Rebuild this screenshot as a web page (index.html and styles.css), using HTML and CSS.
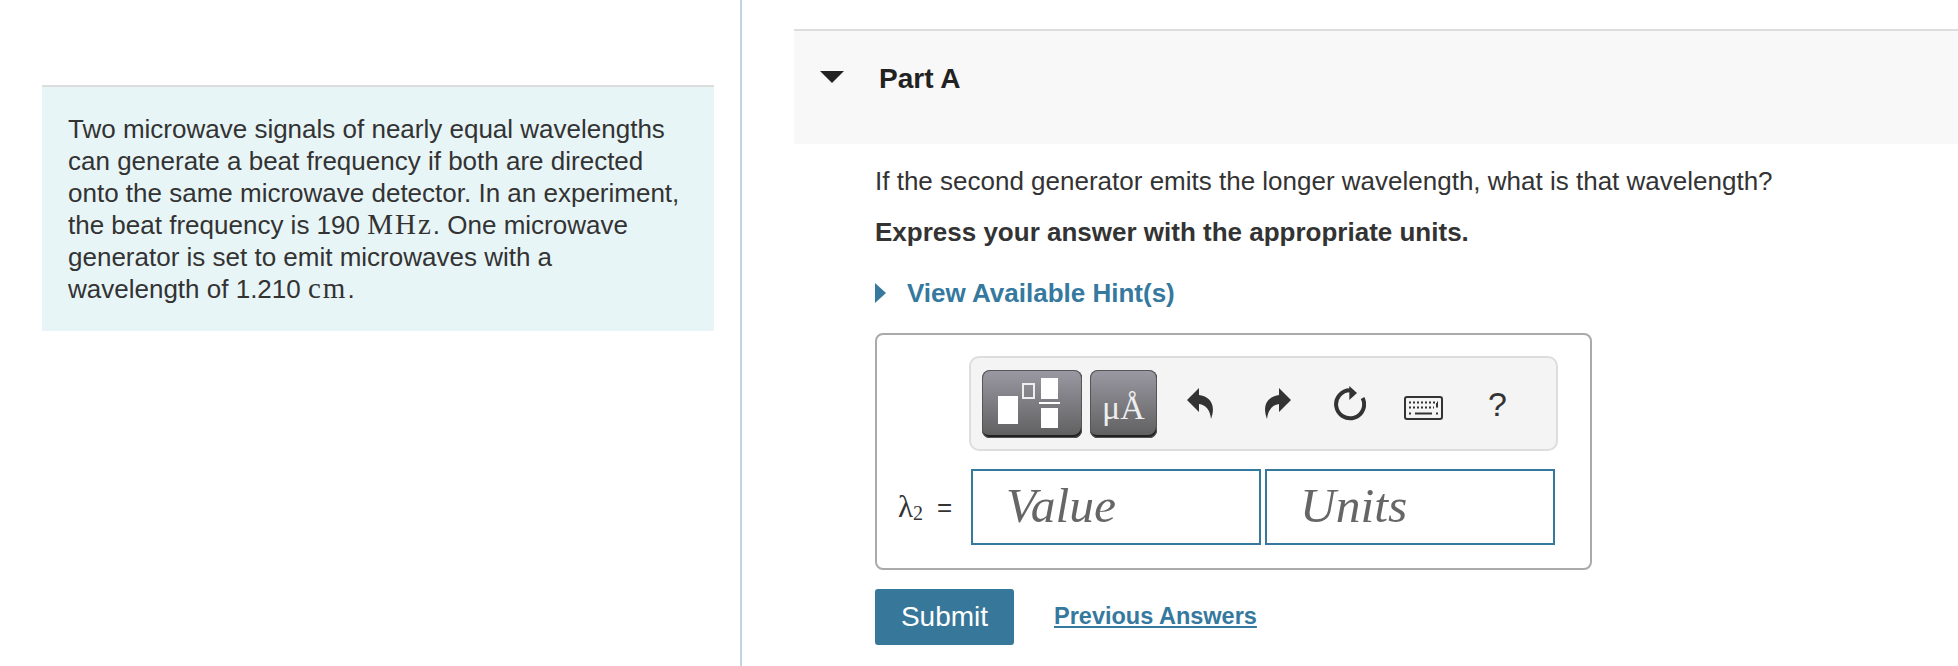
FILE: index.html
```html
<!DOCTYPE html>
<html lang="en">
<head>
  <meta charset="UTF-8">
  <meta name="viewport" content="width=device-width, initial-scale=1.0">
  <title>Part A</title>
  <link rel="stylesheet" href="styles.css">
</head>
<body>
  <div class="page">
    <div class="left-col">
      <div class="intro">
        <p>Two microwave signals of nearly equal wavelengths can generate a beat frequency if both are directed onto the same microwave detector. In an experiment, the beat frequency is 190 <span class="math">MHz</span>. One microwave generator is set to emit microwaves with a wavelength of 1.210 <span class="math">cm</span>.</p>
      </div>
    </div>

    <div class="right-col">
      <div class="part-header">
        <span class="caret-down"></span>
        <h2>Part A</h2>
      </div>

      <div class="part-body">
        <p class="question">If the second generator emits the longer wavelength, what is that wavelength?</p>
        <p class="instruction">Express your answer with the appropriate units.</p>

        <div class="hint">
          <span class="caret-right"></span>
          <a href="#">View Available Hint(s)</a>
        </div>

        <div class="answer-box">
          <div class="toolbar">
            <button class="tool tool-wide">
              <svg width="100" height="68" viewBox="0 0 100 68">
                <rect x="16" y="26" width="20" height="28" fill="#fff"/>
                <rect x="41" y="14" width="11" height="14" fill="none" stroke="#eee" stroke-width="2"/>
                <rect x="59" y="8" width="17" height="21" fill="#fff"/>
                <rect x="57" y="32" width="21" height="2" fill="#fff"/>
                <rect x="59" y="38" width="17" height="20" fill="#fff"/>
              </svg>
            </button>
            <button class="tool tool-units">μÅ</button>
            <svg class="icon icon-undo" width="27" height="31" viewBox="0 0 27 31">
              <path d="M0 12 L12 0 V7 C21 8 30 15 24 31 C23 22 19 17 12 16 V24 Z" fill="#333"/>
            </svg>
            <svg class="icon icon-redo" width="27" height="31" viewBox="0 0 27 31">
              <path d="M27 12 L15 0 V7 C6 8 -3 15 3 31 C4 22 8 17 15 16 V24 Z" fill="#333"/>
            </svg>
            <svg class="icon icon-reload" width="32" height="36" viewBox="0 0 32 36">
              <path d="M16 4.3 A14 14 0 1 0 28.6 12" fill="none" stroke="#333" stroke-width="4"/>
              <path d="M15.3 0 L23 7 L15.3 14 Z" fill="#333"/>
            </svg>
            <svg class="icon icon-keys" width="39" height="24" viewBox="0 0 39 24">
              <rect x="1" y="1" width="37" height="22" rx="2" fill="none" stroke="#333" stroke-width="2"/>
              <path d="M5 6.5 H34 M5 11.5 H30" fill="none" stroke="#333" stroke-width="2" stroke-dasharray="2 2"/>
              <path d="M11 17.5 H28 M33 11.5 V7" fill="none" stroke="#333" stroke-width="2"/>
              <path d="M5 17.5 H7 M32 17.5 H34" fill="none" stroke="#333" stroke-width="2"/>
            </svg>
            <span class="tool-help">?</span>
          </div>

          <div class="answer-row">
            <span class="answer-label"><span class="lambda">λ<sub>2</sub></span><span class="equals">=</span></span>
            <div class="field">Value</div>
            <div class="field">Units</div>
          </div>
        </div>

        <div class="actions">
          <button class="submit">Submit</button>
          <a class="previous" href="#">Previous Answers</a>
        </div>
      </div>
    </div>
  </div>
</body>
</html>
```

FILE: styles.css
```css
html, body {
  margin: 0;
  height: 100%;
}

body {
  font-family: "Liberation Sans", Arial, sans-serif;
  color: #333;
  background-color: #fff;
  overflow: hidden;
}

.page {
  display: flex;
  height: 666px;
}

.left-col {
  flex: none;
  width: 698px;
  padding: 85px 0 0 42px;
  border-right: 2px solid #c3d3e4;
}

.intro {
  width: 672px;
  height: 244px;
  border-top: 2px solid #ddd;
  background-color: #e8f5f7;
}

.intro p {
  margin: 0;
  padding: 26px 26px 0;
  font-size: 26px;
  line-height: 32px;
}

.math {
  font-family: "Liberation Serif", serif;
  font-size: 29px;
  line-height: 0;
  letter-spacing: 2px;
}

.right-col {
  flex: 1;
  padding: 29px 0 0 52px;
}

.part-header {
  display: flex;
  align-items: flex-start;
  height: 113px;
  border-top: 2px solid #ddd;
  background-color: #f8f8f8;
}

.caret-down {
  width: 0;
  height: 0;
  margin: 40px 0 0 26px;
  border-left: 12px solid transparent;
  border-right: 12px solid transparent;
  border-top: 12px solid #222;
}

.part-header h2 {
  margin: 33px 0 0 35px;
  font-size: 28px;
  line-height: 30px;
  color: #222;
}

.part-body {
  padding: 0 0 0 81px;
}

.question {
  margin: 22px 0 0;
  font-size: 26px;
  line-height: 30px;
}

.instruction {
  margin: 21px 0 0;
  font-size: 26px;
  line-height: 30px;
  font-weight: bold;
}

.hint {
  display: flex;
  align-items: center;
  margin-top: 31px;
  height: 30px;
}

.caret-right {
  width: 0;
  height: 0;
  border-top: 10px solid transparent;
  border-bottom: 10px solid transparent;
  border-left: 11px solid #35799e;
}

.hint a {
  margin-left: 21px;
  font-size: 26px;
  font-weight: bold;
  color: #35799e;
  text-decoration: none;
}

.answer-box {
  width: 621px;
  height: 212px;
  margin-top: 25px;
  padding: 21px 0 0 92px;
  border: 2px solid #aaa;
  border-radius: 8px;
}

.toolbar {
  display: flex;
  align-items: center;
  box-sizing: border-box;
  width: 589px;
  height: 95px;
  padding-left: 11px;
  border: 2px solid #ddd;
  border-radius: 10px;
  background-color: #f4f4f4;
}

.tool {
  flex: none;
  height: 68px;
  padding: 0;
  border: none;
  border-radius: 8px;
  background: linear-gradient(#9b99a3, #5e5e5e);
  box-shadow: inset 0 0 0 1px #555, inset -1px -3px 0 #222;
}

.tool svg {
  display: block;
}

.tool-wide {
  width: 100px;
}

.tool-units {
  width: 67px;
  margin-left: 8px;
  padding-top: 8px;
  font-family: "Liberation Serif", serif;
  font-size: 34px;
  line-height: 40px;
  color: #eee;
}

.icon {
  flex: none;
}

.icon-undo {
  margin-left: 30px;
}

.icon-redo {
  margin-left: 50px;
}

.icon-reload {
  margin-left: 43px;
}

.icon-keys {
  margin-left: 38px;
  margin-top: 9px;
}

.tool-help {
  margin-left: 45px;
  font-size: 34px;
  line-height: 40px;
  color: #333;
}

.answer-row {
  display: flex;
  align-items: center;
  gap: 4px;
  margin: 18px 0 0 -69px;
}

.answer-label {
  display: flex;
  align-items: center;
  width: 69px;
  margin-left: -2px;
  font-family: "Liberation Serif", serif;
}

.lambda {
  font-size: 31px;
  line-height: 36px;
}

.lambda sub {
  font-size: 20px;
  line-height: 0;
  vertical-align: -3px;
}

.equals {
  margin-left: 14px;
  font-family: "Liberation Sans", Arial, sans-serif;
  font-size: 26px;
}

.field {
  box-sizing: border-box;
  width: 290px;
  height: 76px;
  padding-left: 33px;
  border: 2px solid #35799e;
  background-color: #fff;
  font-family: "Liberation Serif", serif;
  font-style: italic;
  font-size: 49.5px;
  line-height: 70px;
  color: #666;
}

.actions {
  display: flex;
  align-items: center;
  margin-top: 19px;
}

.submit {
  width: 139px;
  height: 56px;
  padding: 0;
  border: none;
  border-radius: 3px;
  background-color: #37779a;
  color: #fff;
  font-family: "Liberation Sans", Arial, sans-serif;
  font-size: 28px;
}

.previous {
  margin: 0 0 2px 40px;
  font-size: 23.5px;
  font-weight: bold;
  color: #35799e;
}
```
